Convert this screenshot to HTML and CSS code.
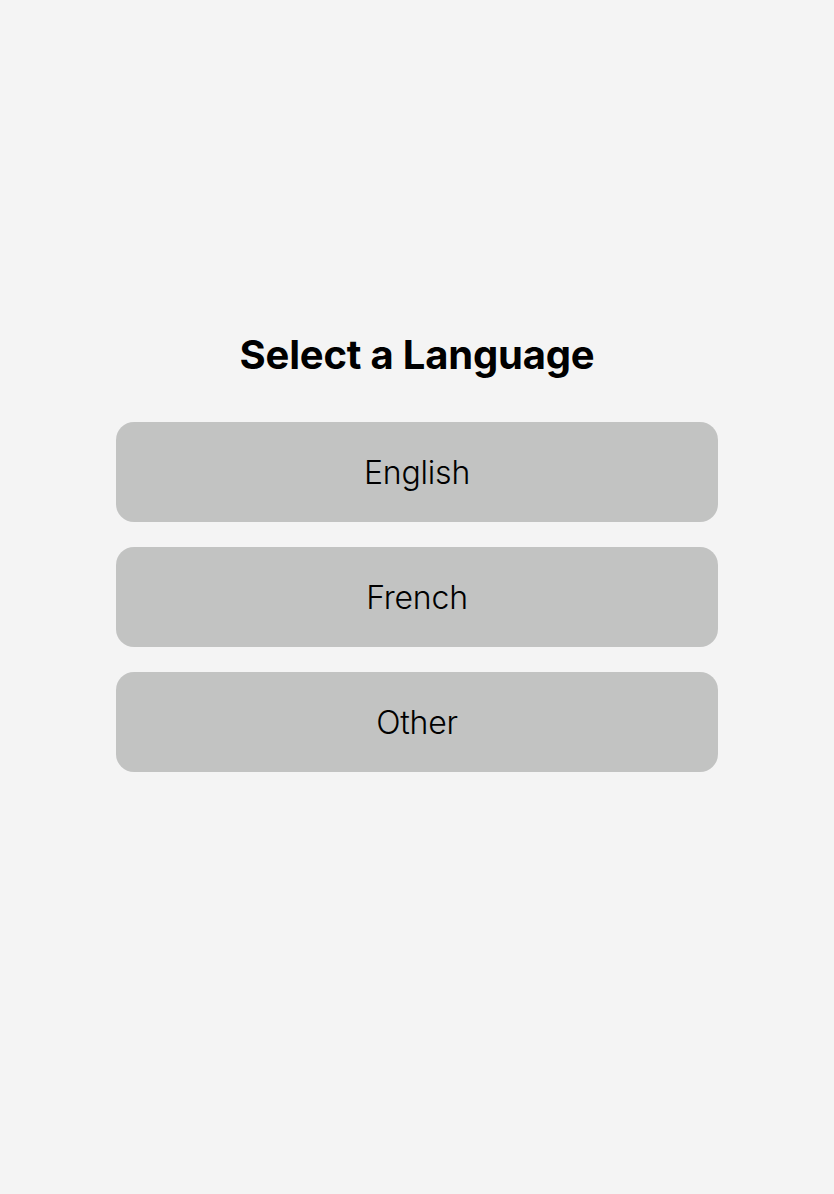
FILE: index.html
```html
<!DOCTYPE html>
<html lang="en">
<head>
<meta charset="utf-8">
<title>Select a Language</title>
<link rel="stylesheet" href="styles.css">
</head>
<body>
<main class="page">
  <h1 class="title">Select a Language</h1>
  <div class="options">
    <button class="option">English</button>
    <button class="option">French</button>
    <button class="option">Other</button>
  </div>
</main>
</body>
</html>
```

FILE: styles.css
```css
html, body {
  margin: 0;
  padding: 0;
  background: #f4f4f4;
}
body {
  font-family: Inter, "Noto Sans", "Liberation Sans", sans-serif;
  color: #000;
  height: 1194px;
}
.page {
  width: 602px;
  margin: 0 auto;
  padding-top: 330px;
  display: flex;
  flex-direction: column;
  align-items: center;
}
.title {
  margin: 0 0 42px;
  font-size: 40px;
  font-weight: 700;
  line-height: 50px;
  letter-spacing: -0.2px;
}
.options {
  width: 100%;
  display: flex;
  flex-direction: column;
  gap: 25px;
}
.option {
  height: 100px;
  border: none;
  border-radius: 18px;
  background: #c2c3c2;
  font-family: inherit;
  font-size: 32px;
  font-weight: 350;
  letter-spacing: -0.2px;
  color: #000;
  padding: 0;
}
```
